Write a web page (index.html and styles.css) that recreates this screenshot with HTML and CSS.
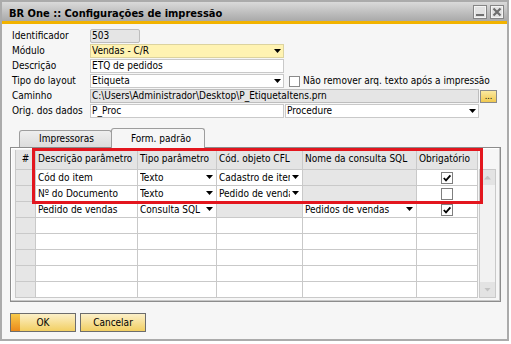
FILE: index.html
```html
<!DOCTYPE html>
<html lang="pt">
<head>
<meta charset="utf-8">
<title>BR One :: Configurações de impressão</title>
<link rel="stylesheet" href="styles.css">
</head>
<body>
<div class="window">
  <div class="titlebar">
    <span class="title">BR One :: Configurações de impressão</span>
    <span class="tbtns">
      <svg class="tbtn" width="14" height="14" viewBox="0 0 14 14">
        <rect x="0.5" y="0.5" width="13" height="13" fill="#e2e2e2" stroke="#858585"/>
        <rect x="1.5" y="1.5" width="11" height="11" fill="none" stroke="#f4f4f4"/>
        <rect x="3" y="9" width="8" height="2" fill="#707070"/>
      </svg>
      <svg class="tbtn" width="14" height="14" viewBox="0 0 14 14">
        <rect x="0.5" y="0.5" width="13" height="13" fill="#e2e2e2" stroke="#858585"/>
        <rect x="1.5" y="1.5" width="11" height="11" fill="none" stroke="#f4f4f4"/>
        <path d="M3.5 3.5 L10.5 10.5 M10.5 3.5 L3.5 10.5" stroke="#6e6e6e" stroke-width="2.2"/>
      </svg>
    </span>
  </div>
  <div class="accent"></div>
  <div class="content">
    <div class="form">
      <div class="frow">
        <span class="lbl">Identificador</span>
        <div class="field ro w50">503</div>
      </div>
      <div class="frow">
        <span class="lbl">Módulo</span>
        <div class="field sel yellow w194"><span class="txt">Vendas - C/R</span><i class="arrow"></i></div>
      </div>
      <div class="frow">
        <span class="lbl">Descrição</span>
        <div class="field w194">ETQ de pedidos</div>
      </div>
      <div class="frow">
        <span class="lbl">Tipo do layout</span>
        <div class="field sel w194"><span class="txt">Etiqueta</span><i class="arrow"></i></div>
        <span class="cbox"></span>
        <span class="cblabel">Não remover arq. texto após a impressão</span>
      </div>
      <div class="frow">
        <span class="lbl">Caminho</span>
        <div class="field ro w389">C:\Users\Administrador\Desktop\P_EtiquetaItens.prn</div>
        <span class="dots">...</span>
      </div>
      <div class="frow">
        <span class="lbl">Orig. dos dados</span>
        <div class="field w194">P_Proc</div>
        <div class="field sel w194"><span class="txt">Procedure</span><i class="arrow"></i></div>
      </div>
    </div>

    <div class="tabs">
      <div class="tab">Impressoras</div>
      <div class="tab active">Form. padrão</div>
    </div>

    <div class="panel">
      <div class="grid">
        <div class="hc num">#</div>
        <div class="hc">Descrição parâmetro</div>
        <div class="hc">Tipo parâmetro</div>
        <div class="hc">Cód. objeto CFL</div>
        <div class="hc">Nome da consulta SQL</div>
        <div class="hc">Obrigatório</div>

        <div class="c num"></div>
        <div class="c">Cód do item</div>
        <div class="c sel"><span class="txt">Texto</span><i class="arrow"></i></div>
        <div class="c sel"><span class="txt">Cadastro de itens</span><i class="arrow"></i></div>
        <div class="c off"></div>
        <div class="c ctr"><span class="chk"><svg width="10" height="10" viewBox="0 0 10 10"><path d="M1.8 5 L4 7.4 L8.4 2.4" fill="none" stroke="#000" stroke-width="1.8"/></svg></span></div>

        <div class="c num"></div>
        <div class="c">Nº do Documento</div>
        <div class="c sel"><span class="txt">Texto</span><i class="arrow"></i></div>
        <div class="c sel"><span class="txt">Pedido de vendas</span><i class="arrow"></i></div>
        <div class="c off"></div>
        <div class="c ctr"><span class="chk"></span></div>

        <div class="c num"></div>
        <div class="c">Pedido de vendas</div>
        <div class="c sel"><span class="txt">Consulta SQL</span><i class="arrow"></i></div>
        <div class="c off"></div>
        <div class="c sel"><span class="txt">Pedidos de vendas</span><i class="arrow"></i></div>
        <div class="c ctr"><span class="chk"><svg width="10" height="10" viewBox="0 0 10 10"><path d="M1.8 5 L4 7.4 L8.4 2.4" fill="none" stroke="#000" stroke-width="1.8"/></svg></span></div>

        <div class="c num"></div><div class="c"></div><div class="c"></div><div class="c"></div><div class="c"></div><div class="c"></div>
        <div class="c num"></div><div class="c"></div><div class="c"></div><div class="c"></div><div class="c"></div><div class="c"></div>
        <div class="c num"></div><div class="c"></div><div class="c"></div><div class="c"></div><div class="c"></div><div class="c"></div>
        <div class="c num"></div><div class="c"></div><div class="c"></div><div class="c"></div><div class="c"></div><div class="c"></div>
        <div class="c num"></div><div class="c"></div><div class="c"></div><div class="c"></div><div class="c"></div><div class="c"></div>
      </div>
      <div class="scroll">
        <div class="sbtn"><i class="up"></i></div>
        <div class="sbtn"><i class="down"></i></div>
      </div>
    </div>

    <div class="buttons">
      <div class="btn ok">OK</div>
      <div class="btn">Cancelar</div>
    </div>
  </div>
  <div class="highlight"></div>
</div>
</body>
</html>
```

FILE: styles.css
```css
* { box-sizing: border-box; }

body {
  margin: 0;
  background: #ffffff;
  font-family: "DejaVu Sans Condensed", "DejaVu Sans", sans-serif;
  font-stretch: condensed;
  font-size: 10px;
  color: #000;
}

.window {
  position: relative;
  width: 509px;
  height: 341px;
  border: 2px solid #ababab;
  background: #f6f6f6;
  display: flex;
  flex-direction: column;
}

.titlebar {
  height: 19px;
  display: flex;
  background: linear-gradient(#dadada, #a9a9a9);
  padding-left: 7px;
  padding-right: 3px;
}

.title {
  font-weight: bold;
  font-size: 11px;
  line-height: 13px;
  padding-top: 5px;
  color: #000;
}

.tbtns {
  margin-left: auto;
  display: flex;
  gap: 3px;
  padding-top: 3px;
}

.tbtn { display: block; }

.accent {
  height: 3px;
  background: #f2b300;
}

.content {
  flex: 1;
  display: flex;
  flex-direction: column;
}

/* form */
.form {
  padding: 5px 0 0 10px;
  display: flex;
  flex-direction: column;
  gap: 1px;
}

.frow {
  display: flex;
  align-items: center;
  height: 14px;
}

.lbl {
  width: 78px;
  line-height: 14px;
  white-space: nowrap;
}

.field {
  position: relative;
  height: 14px;
  border: 1px solid #c9c9c9;
  background: #fff;
  padding: 0 1px;
  line-height: 12px;
  white-space: nowrap;
  overflow: hidden;
  margin-right: 1px;
}

.txt {
  display: block;
  overflow: hidden;
  white-space: nowrap;
}

.field.sel { padding-right: 12px; }
.field.ro { background: #e5e5e5; border-color: #bdbdbd; }
.field.yellow { background: #fff3b2; border-color: #dcd39f; }
.w50 { width: 50px; border-radius: 2px; }
.w194 { width: 194px; }
.w389 { width: 389px; }

.arrow {
  position: absolute;
  right: 2px;
  top: 4px;
  width: 7px;
  height: 4px;
  background: #000;
  clip-path: polygon(0 0, 100% 0, 50% 100%);
}

.cbox {
  width: 11px;
  height: 11px;
  border: 1px solid #8a8a8a;
  background: #fff;
  margin-left: 4px;
}

.cblabel {
  margin-left: 3px;
  line-height: 14px;
  white-space: nowrap;
}

.dots {
  width: 17px;
  height: 13px;
  border: 1px solid #8b8b8b;
  background: linear-gradient(#fbe9a0, #f1c94f);
  font-size: 9px;
  line-height: 10px;
  text-align: center;
}

/* tabs */
.tabs {
  margin-top: 10px;
  height: 19px;
  display: flex;
  align-items: flex-end;
  padding-left: 17px;
  position: relative;
  z-index: 1;
}

.tab {
  width: 93px;
  height: 17px;
  border: 1px solid #9d9d9d;
  border-bottom: none;
  border-radius: 3px 3px 0 0;
  background: linear-gradient(#eeeeee, #dcdcdc);
  padding-left: 19px;
  line-height: 15px;
  white-space: nowrap;
}

.tab.active {
  width: 94px;
  height: 20px;
  margin-left: -1px;
  margin-bottom: -1px;
  background: #f6f6f6;
  padding-top: 2px;
}

/* panel */
.panel {
  margin-left: 8px;
  width: 491px;
  height: 155px;
  border: 1px solid #8c8c8c;
  box-shadow: inset -1px -1px 0 #c8c8c8, inset 1px 1px 0 #ffffff;
  padding: 2px 0 0 4px;
  display: flex;
  align-items: flex-start;
}

.grid {
  display: grid;
  grid-template-columns: 20px 102px 79px 86px 114px 61px;
  grid-template-rows: 20px repeat(8, 16px);
  border-left: 1px solid #c9c9c9;
}

.hc, .c {
  border-right: 1px solid #c9c9c9;
  border-bottom: 1px solid #c9c9c9;
  padding-left: 2px;
  line-height: 15px;
  white-space: nowrap;
  overflow: hidden;
  position: relative;
}

.hc { background: #e4e4e4; padding-top: 1px; }
.hc.num { text-align: center; padding-left: 0; }
.c { background: #fff; }
.c.num, .c.off { background: #e6e6e6; }
.c.sel { padding-right: 12px; }
.c .arrow { right: 3px; top: 5px; }
.c.ctr { display: flex; justify-content: center; align-items: center; padding-left: 0; }

.chk {
  width: 12px;
  height: 12px;
  border: 1px solid #7f7f7f;
  background: #fff;
  display: flex;
  align-items: center;
  justify-content: center;
}

.chk svg { display: block; }

.scroll {
  margin-top: 19px;
  margin-left: 1px;
  width: 17px;
  height: 129px;
  border: 1px solid #c9c9c9;
  background: #f2f2f2;
  display: flex;
  flex-direction: column;
  justify-content: space-between;
}

.sbtn {
  height: 15px;
  background: #e3e3e3;
  display: flex;
  align-items: center;
  justify-content: center;
}

.sbtn i {
  width: 7px;
  height: 4px;
  background: #c2c2c2;
}

.sbtn .up { clip-path: polygon(50% 0, 100% 100%, 0 100%); }
.sbtn .down { clip-path: polygon(0 0, 100% 0, 50% 100%); }

/* buttons */
.buttons {
  margin: 11px 0 0 8px;
  display: flex;
  gap: 4px;
}

.btn {
  width: 66px;
  height: 19px;
  border: 1px solid #6d6d6d;
  background: linear-gradient(#fcf0c9, #f2cf62);
  text-align: center;
  line-height: 17px;
}

.btn.ok {
  background:
    linear-gradient(#f8cb4c, #eb8a1a) no-repeat 0 0 / 9px 100%,
    linear-gradient(#fcf0c9, #f2cf62);
}

.highlight {
  position: absolute;
  left: 30px;
  top: 146px;
  width: 451px;
  height: 56px;
  border: 3px solid #e3161e;
  pointer-events: none;
}
```
